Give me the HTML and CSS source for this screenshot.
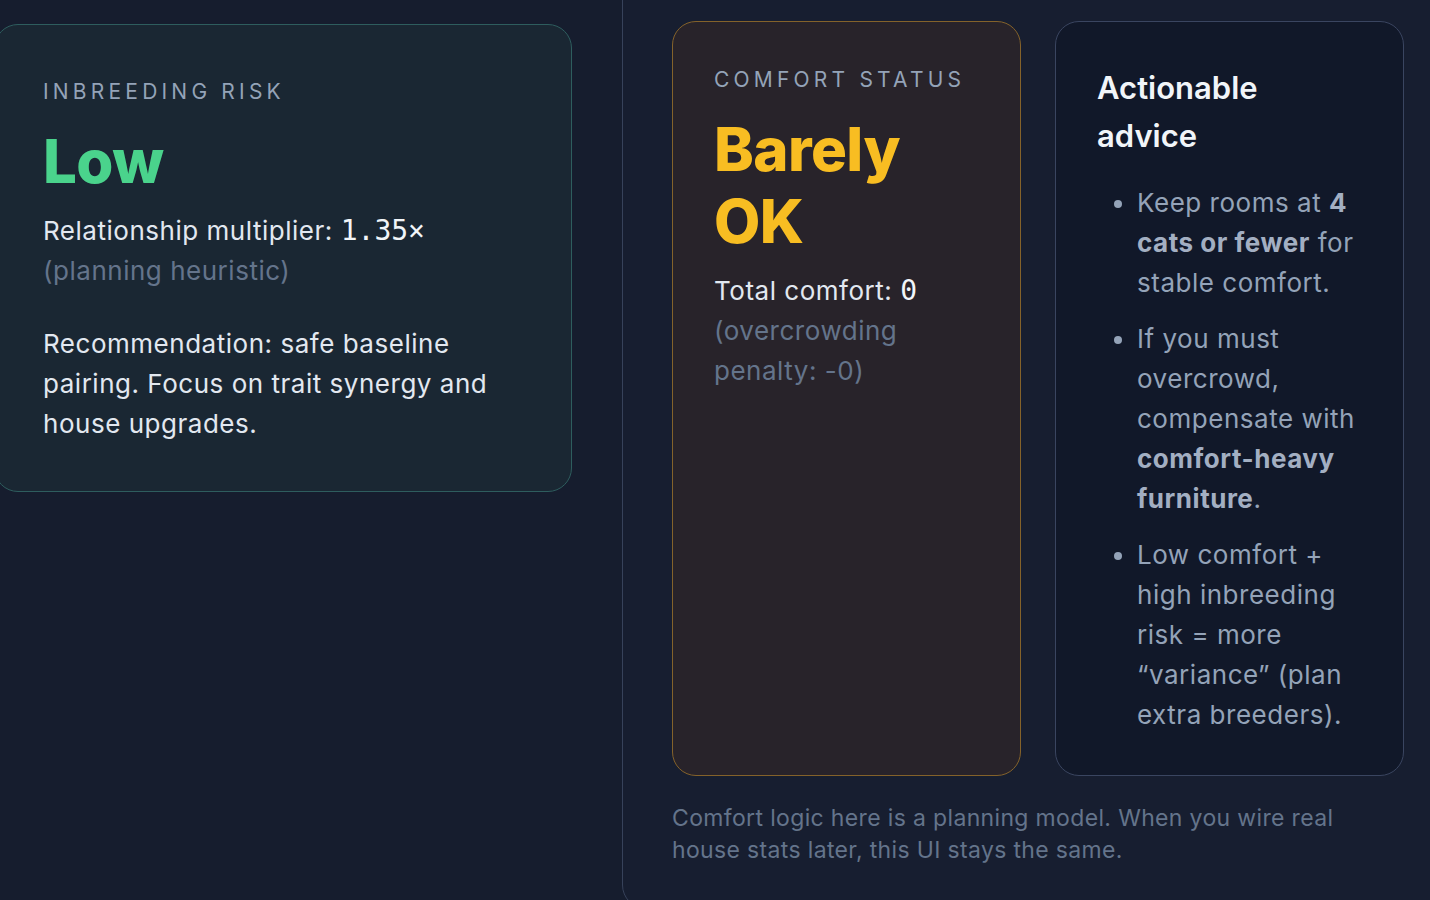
FILE: index.html
```html
<!DOCTYPE html>
<html lang="en">
<head>
<meta charset="utf-8">
<title>Breeding planner</title>
<link rel="stylesheet" href="styles.css">
</head>
<body>
<div class="page">
  <section class="left-col">
    <div class="card risk-card">
      <div class="label">Inbreeding risk</div>
      <div class="big big-green">Low</div>
      <p class="text">Relationship multiplier: <code class="mono">1.35×</code> <span class="muted">(planning heuristic)</span></p>
      <p class="text">Recommendation: safe baseline pairing. Focus on trait synergy and house upgrades.</p>
    </div>
  </section>
  <section class="panel">
    <div class="cards">
      <div class="card comfort-card">
        <div class="label">Comfort status</div>
        <div class="big big-amber">Barely OK</div>
        <p class="text">Total comfort: <code class="mono">0</code> <span class="muted">(overcrowding penalty: -0)</span></p>
      </div>
      <div class="card advice-card">
        <h3 class="advice-title">Actionable advice</h3>
        <ul class="advice-list">
          <li>Keep rooms at <b>4 cats or fewer</b> for stable comfort.</li>
          <li>If you must overcrowd, compensate with <b>comfort-heavy furniture</b>.</li>
          <li>Low comfort + high inbreeding risk = more “variance” (plan extra breeders).</li>
        </ul>
      </div>
    </div>
    <p class="footnote">Comfort logic here is a planning model. When you wire real house stats later, this UI stays the same.</p>
  </section>
</div>
</body>
</html>
```

FILE: styles.css
```css
html, body {
  margin: 0;
  padding: 0;
  height: 900px;
  overflow: hidden;
  background: #161d2e;
  font-family: Inter, "Noto Sans", "Liberation Sans", sans-serif;
  color: #e2e8f0;
}

.page {
  display: flex;
  gap: 50px;
  margin-left: -6px;
  align-items: flex-start;
}

.left-col {
  flex: none;
  width: 578px;
  padding-top: 24px;
}

.card {
  box-sizing: border-box;
  border-radius: 24px;
  border: 1px solid transparent;
}

.risk-card {
  background: #1a2733;
  border-color: #2e5d5e;
  padding: 51px 49px 47px 48px;
}

.label {
  font-size: 21px;
  line-height: 32px;
  letter-spacing: 0.2em;
  text-transform: uppercase;
  color: #94a3b8;
  margin-bottom: 17px;
}

.big {
  font-size: 60px;
  line-height: 72px;
  font-weight: 800;
  letter-spacing: -0.01em;
  margin-bottom: 14px;
}

.big-green { color: #4ad38c; }
.big-amber { color: #f8bd22; }

.text {
  margin: 0 0 33px 0;
  font-size: 26px;
  line-height: 40px;
  letter-spacing: 0.02em;
  color: #e2e8f0;
}

.text:last-child { margin-bottom: 0; }

.mono {
  font-family: "DejaVu Sans Mono", "Liberation Mono", monospace;
  font-size: 28px;
  letter-spacing: 0;
  color: #f1f5f9;
}

.muted { color: #64748b; }

.panel {
  flex: none;
  box-sizing: border-box;
  width: 832px;
  height: 939px;
  margin-top: -30px;
  padding: 50px 49px 40px 49px;
  background: #171e30;
  border: 1px solid #37425a;
  border-radius: 24px;
}

.cards {
  display: grid;
  grid-template-columns: 349px 349px;
  gap: 34px;
}

.comfort-card {
  background: #28232a;
  border-color: #84622a;
  padding: 42px 36px 42px 41px;
}

.advice-card {
  background: #111829;
  border-color: #3a4560;
  padding: 42px 34px 40px 41px;
}

.advice-title {
  margin: 0 0 23px 0;
  max-width: 230px;
  font-size: 31px;
  line-height: 48px;
  font-weight: 600;
  letter-spacing: 0;
  color: #f1f5f9;
}

.advice-list {
  margin: 0;
  padding-left: 40px;
  color: #94a3b8;
  font-size: 26px;
  line-height: 40px;
  letter-spacing: 0.02em;
}

.advice-list li { margin-bottom: 16px; }
.advice-list li:last-child { margin-bottom: 0; }
.advice-list b { font-weight: 700; color: #a3afc2; }

.footnote {
  margin: 26px 0 0 0;
  max-width: 700px;
  font-size: 23px;
  line-height: 32px;
  letter-spacing: 0.015em;
  color: #64748b;
}
```
